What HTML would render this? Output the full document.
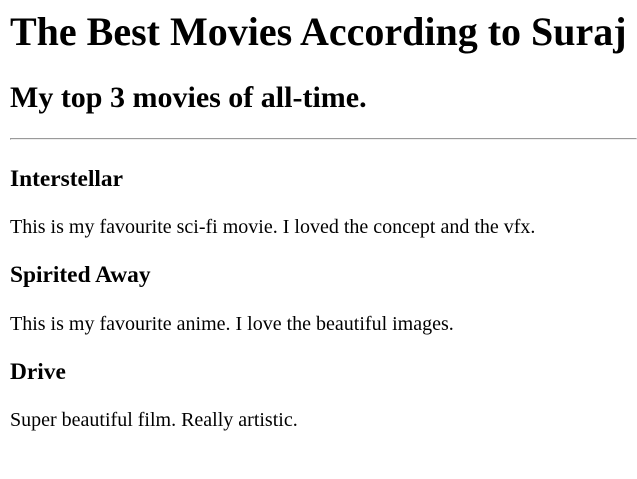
<!DOCTYPE html>
<html>
<head>
<meta charset="utf-8">
<style>
html { zoom: 1.25; }
body { margin: 5px 8px 8px; font-family: "Liberation Serif", serif; color: #000; background: #fff; }
h1 { margin-top: 6px; white-space: nowrap; }
h2 { margin: 21.5px 0 18px; }
hr { margin-right: -8px; margin-bottom: 20.5px; }
</style>
</head>
<body>
<h1>The Best Movies According to Suraj</h1>
<h2>My top 3 movies of all-time.</h2>
<hr>
<h3>Interstellar</h3>
<p>This is my favourite sci-fi movie. I loved the concept and the vfx.</p>
<h3>Spirited Away</h3>
<p>This is my favourite anime. I love the beautiful images.</p>
<h3>Drive</h3>
<p>Super beautiful film. Really artistic.</p>
</body>
</html>
